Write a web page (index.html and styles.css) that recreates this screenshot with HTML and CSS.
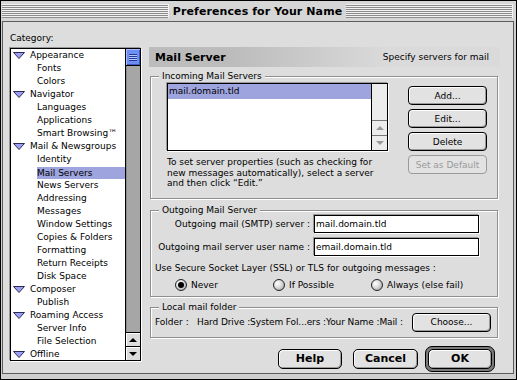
FILE: index.html
```html
<!DOCTYPE html>
<html lang="en">
<head>
  <meta charset="UTF-8" />
  <title>Preferences for Your Name</title>
  <link rel="stylesheet" href="styles.css">
</head>
<body>
  <div class="window">
    <div class="titlebar">
      <span class="stripes"></span>
      <span class="title">Preferences for Your Name</span>
      <span class="stripes"></span>
    </div>

    <div class="content">
      <div class="sidebar">
        <div class="cat-label">Category:</div>
        <div class="tree-box">
          <ul class="tree">
            <li class="parent"><svg class="tri" width="12" height="7" viewBox="0 0 12 7"><path d="M0.5 0.5H11.5L6 6.5Z" /></svg>Appearance</li>
            <li class="child">Fonts</li>
            <li class="child">Colors</li>
            <li class="parent"><svg class="tri" width="12" height="7" viewBox="0 0 12 7"><path d="M0.5 0.5H11.5L6 6.5Z" /></svg>Navigator</li>
            <li class="child">Languages</li>
            <li class="child">Applications</li>
            <li class="child">Smart Browsing™</li>
            <li class="parent"><svg class="tri" width="12" height="7" viewBox="0 0 12 7"><path d="M0.5 0.5H11.5L6 6.5Z" /></svg>Mail &amp; Newsgroups</li>
            <li class="child">Identity</li>
            <li class="child selected"><span>Mail Servers</span></li>
            <li class="child">News Servers</li>
            <li class="child">Addressing</li>
            <li class="child">Messages</li>
            <li class="child">Window Settings</li>
            <li class="child">Copies &amp; Folders</li>
            <li class="child">Formatting</li>
            <li class="child">Return Receipts</li>
            <li class="child">Disk Space</li>
            <li class="parent"><svg class="tri" width="12" height="7" viewBox="0 0 12 7"><path d="M0.5 0.5H11.5L6 6.5Z" /></svg>Composer</li>
            <li class="child">Publish</li>
            <li class="parent"><svg class="tri" width="12" height="7" viewBox="0 0 12 7"><path d="M0.5 0.5H11.5L6 6.5Z" /></svg>Roaming Access</li>
            <li class="child">Server Info</li>
            <li class="child">File Selection</li>
            <li class="parent"><svg class="tri" width="12" height="7" viewBox="0 0 12 7"><path d="M0.5 0.5H11.5L6 6.5Z" /></svg>Offline</li>
          </ul>
          <div class="vscroll">
            <div class="thumb"><span class="grip"></span></div>
            <div class="track"></div>
            <div class="arrow"><span class="up"></span></div>
            <div class="arrow"><span class="down"></span></div>
          </div>
        </div>
      </div>

      <div class="panel">
        <div class="panel-head">
          <b>Mail Server</b>
          <span>Specify servers for mail</span>
        </div>

        <div class="group incoming">
          <span class="group-title">Incoming Mail Servers</span>
          <div class="inc-left">
            <div class="mailbox">
              <div class="mail-items">
                <div class="mail-item selected">mail.domain.tld</div>
              </div>
              <div class="mini-scroll">
                <div class="track"></div>
                <div class="arrow"><span class="up"></span></div>
                <div class="arrow"><span class="down"></span></div>
              </div>
            </div>
            <p class="help">To set server properties (such as checking for<br>new messages automatically), select a server<br>and then click “Edit.”</p>
          </div>
          <div class="btn-col">
            <button class="btn">Add...</button>
            <button class="btn">Edit...</button>
            <button class="btn">Delete</button>
            <button class="btn" disabled>Set as Default</button>
          </div>
        </div>

        <div class="group outgoing">
          <span class="group-title">Outgoing Mail Server</span>
          <div class="field-grid">
            <label for="smtp">Outgoing mail (SMTP) server :</label>
            <input type="text" id="smtp" value="mail.domain.tld" />
            <label for="smtpUser">Outgoing mail server user name :</label>
            <input type="text" id="smtpUser" value="email.domain.tld" />
          </div>
          <div class="ssl-text">Use Secure Socket Layer (SSL) or TLS for outgoing messages :</div>
          <div class="radios">
            <span class="opt"><span class="radio checked"></span>Never</span>
            <span class="opt"><span class="radio"></span>If Possible</span>
            <span class="opt"><span class="radio"></span>Always (else fail)</span>
          </div>
        </div>

        <div class="group local">
          <span class="group-title">Local mail folder</span>
          <span class="folder-label">Folder :</span>
          <span class="folder-path">Hard Drive :System Fol...ers :Your Name :Mail :</span>
          <button class="btn choose">Choose...</button>
        </div>

        <div class="actions">
          <button class="btn big">Help</button>
          <button class="btn big cancel">Cancel</button>
          <span class="default-ring"><button class="btn big">OK</button></span>
        </div>
      </div>
    </div>
  </div>
</body>
</html>
```

FILE: styles.css
```css
* {
  box-sizing: border-box;
}
body {
  margin: 0;
  font-family: 'DejaVu Sans', Verdana, sans-serif;
  font-size: 9px;
  color: #000;
  background: #ddd;
}
.window {
  width: 517px;
  height: 380px;
  border: 1px solid #000;
  background: #cfcfcf;
  display: flex;
  flex-direction: column;
}
.titlebar {
  height: 20px;
  flex: none;
  display: flex;
  align-items: center;
  gap: 4px;
  padding: 0 3px 0 1px;
  background: #d6d6d6;
}
.stripes {
  flex: 1;
  height: 14px;
  background: repeating-linear-gradient(#f2f2f2 0 1px, #8c8c8c 1px 2px);
  border-right: 1px solid #f2f2f2;
}
.title {
  font-weight: bold;
  font-size: 11px;
  letter-spacing: 0.1px;
}
.content {
  flex: 1;
  margin: 0 2px 5px 1px;
  border: 1px solid #5c5c5c;
  background: #ddd;
  display: flex;
  padding: 10px 0 0 7px;
}

/* category tree */
.sidebar {
  width: 131px;
}
.cat-label {
  line-height: 13px;
  margin-bottom: 3px;
}
.tree-box {
  height: 313px;
  border: 1px solid #000;
  background: #fff;
  display: flex;
  box-shadow: -1px -1px 0 #999, 1px 1px 0 #fff;
}
.tree {
  flex: 1;
  list-style: none;
  margin: 0;
  padding: 0;
}
.tree li {
  height: 13px;
  line-height: 13px;
  display: flex;
  align-items: center;
  white-space: nowrap;
}
.tree .parent {
  padding-left: 2px;
}
.tree .child {
  padding-left: 26px;
}
.tri {
  margin-right: 5px;
}
.tri path {
  fill: #9c9ef4;
  stroke: #2a2a55;
  stroke-width: 1;
}
.tree .selected span {
  flex: 1;
  height: 12px;
  line-height: 12px;
  background: #9ea4dd;
}
.vscroll {
  width: 15px;
  border-left: 1px solid #000;
  background: #a6a6a6;
  display: flex;
  flex-direction: column;
  box-shadow: inset 1px 0 0 #8a8a8a;
}
.thumb {
  height: 17px;
  background: #6d8ef2;
  border-bottom: 1px solid #000;
  box-shadow: inset 1px 1px 0 #a9bcfa, inset -1px -1px 0 #3a5bc4;
  display: flex;
  align-items: center;
  justify-content: center;
}
.grip {
  width: 8px;
  height: 7px;
  background: repeating-linear-gradient(#1f3a99 0 1px, #b7c6fb 1px 2px);
}
.track {
  flex: 1;
}
.arrow {
  height: 14px;
  border-top: 1px solid #000;
  background: #dcdcdc;
  display: flex;
  align-items: center;
  justify-content: center;
  box-shadow: inset 1px 1px 0 #fff;
}
.up {
  border: 4px solid transparent;
  border-top: 0;
  border-bottom: 4px solid #000;
}
.down {
  border: 4px solid transparent;
  border-bottom: 0;
  border-top: 4px solid #000;
}

/* right panel */
.panel {
  width: 351px;
  margin-left: 8px;
  padding-top: 15px;
}
.panel-head {
  height: 20px;
  display: flex;
  align-items: center;
  justify-content: space-between;
  padding: 0 11px 0 6px;
  background: linear-gradient(to right, #bcbcbc 0, #bcbcbc 24%, #dadada 68%, #dadada 100%);
}
.panel-head b {
  font-size: 11px;
}
.group {
  position: relative;
  border: 1px solid #8e8e8e;
  box-shadow: inset 1px 1px 0 #fff, 1px 1px 0 #fff;
  margin: 0 2px 0 1px;
}
.group-title {
  position: absolute;
  top: -7px;
  left: 8px;
  padding: 0 3px;
  line-height: 12px;
  background: #ddd;
}
.incoming {
  margin-top: 9px;
  padding: 6px 10px 9px 16px;
  display: flex;
  gap: 20px;
}
.inc-left {
  width: 221px;
}
.mailbox {
  height: 68px;
  border: 1px solid #000;
  background: #fff;
  display: flex;
  box-shadow: -1px -1px 0 #999, 1px 1px 0 #fff;
}
.mail-items {
  flex: 1;
}
.mail-item {
  height: 15px;
  line-height: 15px;
  padding-left: 1px;
}
.mail-item.selected {
  background: #9ea4dd;
}
.mini-scroll {
  width: 16px;
  border-left: 1px solid #000;
  background: #ececec;
  display: flex;
  flex-direction: column;
}
.mini-scroll .arrow {
  height: 15px;
  background: #ececec;
  border-top: 1px solid #777;
  box-shadow: none;
}
.mini-scroll .up {
  border-bottom-color: #999;
}
.mini-scroll .down {
  border-top-color: #999;
}
.help {
  margin: 6px 0 0;
  line-height: 10.5px;
}
.btn-col {
  width: 79px;
  margin-top: 3px;
  display: flex;
  flex-direction: column;
  gap: 4px;
}
.btn {
  height: 19px;
  padding: 0;
  border: 1px solid #000;
  border-radius: 4px;
  background: #e2e2e2;
  box-shadow: inset 1px 1px 0 #fff, inset -1px -1px 0 #9a9a9a;
  font-family: inherit;
  font-size: 9px;
  color: #000;
}
.btn:disabled {
  color: #9a9a9a;
  border-color: #9a9a9a;
  box-shadow: none;
}
.outgoing {
  margin-top: 11px;
  padding: 4px 0 5px 4px;
}
.field-grid {
  display: grid;
  grid-template-columns: 155px 165px;
  column-gap: 4px;
  row-gap: 5px;
  align-items: center;
}
.field-grid label {
  text-align: right;
}
.field-grid input {
  height: 18px;
  padding: 0 1px;
  border: 1px solid #000;
  font-family: inherit;
  font-size: 9px;
  box-shadow: -1px -1px 0 #999, 1px 1px 0 #fff;
  outline: none;
}
.ssl-text {
  margin-top: 6px;
  line-height: 12px;
}
.radios {
  margin-top: 5px;
  padding-left: 20px;
  display: flex;
  height: 12px;
}
.opt {
  width: 98px;
  display: flex;
  align-items: center;
  gap: 4px;
  white-space: nowrap;
}
.radio {
  width: 12px;
  height: 12px;
  flex: none;
  border-radius: 50%;
  border: 1px solid #222;
  background: radial-gradient(circle at 35% 35%, #fff 0, #e4e4e4 35%, #9a9a9a 100%);
  display: flex;
  align-items: center;
  justify-content: center;
}
.radio.checked::after {
  content: '';
  width: 6px;
  height: 6px;
  border-radius: 50%;
  background: #000;
}
.local {
  margin-top: 10px;
  padding: 5px 6px 5px 4px;
  display: flex;
  align-items: center;
}
.folder-label {
  width: 42px;
}
.folder-path {
  flex: 1;
  white-space: nowrap;
  letter-spacing: -0.1px;
}
.btn.choose {
  width: 79px;
}
.actions {
  margin-top: 8px;
  padding-right: 5px;
  display: flex;
  justify-content: flex-end;
  align-items: center;
}
.btn.big {
  width: 64px;
  height: 20px;
  border-radius: 5px;
  font-size: 11px;
  font-weight: bold;
}
.btn.cancel {
  width: 65px;
  margin: 0 7px 0 11px;
}
.default-ring {
  display: flex;
  padding: 2px;
  border: 1px solid #000;
  border-radius: 7px;
  background: #7a7a7a;
}
```
